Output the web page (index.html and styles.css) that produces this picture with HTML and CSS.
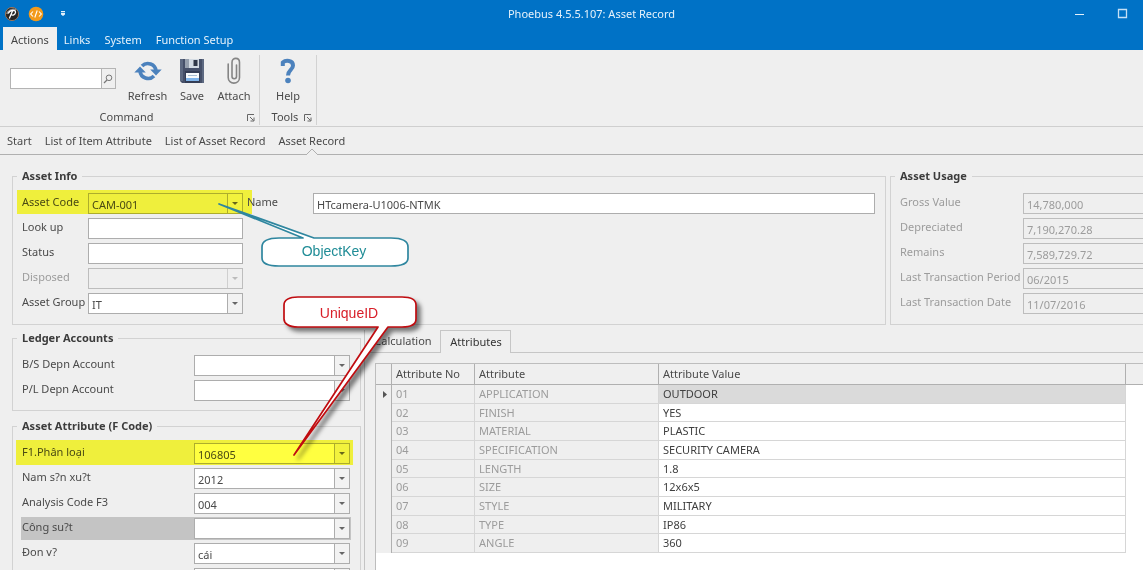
FILE: index.html
```
<!DOCTYPE html>
<html lang="en">
<head>
<meta charset="utf-8">
<title>Phoebus 4.5.5.107: Asset Record</title>
<link rel="stylesheet" href="styles.css">
</head>
<body>
<div class="app">
  <header class="titlebar">
    <div class="quick">
      <svg class="quick-icon" viewBox="0 0 16 16" aria-hidden="true"><circle cx="8" cy="8" r="6.600" fill="#262626" stroke="#96745c"/><path d="M3 8C3.500 5 8 2.500 12 4" stroke="#8a8a8a" stroke-width="2" fill="none"/><path d="M5.500 12 8.500 5M4.500 7C6 3.500 12 3.500 11.500 6.500 11.200 9 8.500 9.500 7.500 8.800" stroke="#fff" stroke-width="1.300" fill="none" stroke-linecap="round"/></svg>
      <svg class="quick-icon" viewBox="0 0 16 16" aria-hidden="true"><circle cx="8" cy="8" r="7.300" fill="#f39a1a"/><path d="M5 5.500 2.700 8 5 10.500M11 5.500 13.300 8 11 10.500M9.200 4.500 6.800 11.500" stroke="#fff" stroke-width="1.100" fill="none"/></svg>
      <button class="quick-more" aria-label="Customize toolbar"><svg width="6" height="6" viewBox="0 0 6 6"><path d="M1 0h4v1.300H1zM1 2h4v1.500L3 5 1 3.500z" fill="#e4f1fb"/></svg></button>
    </div>
    <h1 class="title">Phoebus 4.5.5.107: Asset Record</h1>
    <div class="window-buttons">
      <button aria-label="Minimize"><svg width="11" height="11" viewBox="0 0 11 11"><path d="M1 6.500h9" stroke="#e4f1fb"/></svg></button>
      <button aria-label="Maximize"><svg width="11" height="11" viewBox="0 0 11 11"><path d="M1.500 1.500h8v8h-8z" fill="none" stroke="#c5e0f5" stroke-width="1.300"/></svg></button>
    </div>
  </header>

  <nav class="tabs">
    <button class="tab tab-active">Actions</button>
    <button class="tab">Links</button>
    <button class="tab">System</button>
    <button class="tab">Function Setup</button>
  </nav>

  <section class="ribbon">
    <div class="group">
      <div class="tools">
        <div class="search">
          <input type="text" aria-label="Command search">
          <button aria-label="Search"><svg width="10" height="10" viewBox="0 0 10 10"><circle cx="6" cy="3.800" r="2.800" fill="none" stroke="#777"/><path d="M4 6 1 9" stroke="#777" stroke-width="1.300"/></svg></button>
        </div>
        <button class="tool tool-wide">
          <svg viewBox="0 0 28 28" aria-hidden="true"><path d="M8 9A8.200 8.200 0 0 1 22 14M20 19A8.200 8.200 0 0 1 6 14" fill="none" stroke="#4c82bd" stroke-width="3.600"/><path d="M.3 15.500 6 9.500 11.800 15.500zM16.200 12.500H27.700L22 18.500z" fill="#4c82bd"/></svg>
          Refresh
        </button>
        <button class="tool">
          <svg viewBox="0 0 28 28" aria-hidden="true"><path d="M2 2h24v24H4L2 24z" fill="#465069"/><path d="M2 2h3v22H2zM24 2h2v24h-2z" fill="#5d6981"/><path d="M7 14h15v12H7z" fill="#343d55"/><path d="M7 2h14v9H7z" fill="#96a0ae"/><path d="M11 2h10v9H11z" fill="#d3dae2"/><path d="M15.500 3h4v6h-4z" fill="#303747"/><path d="M8 16h13v8H8z" fill="#f7fafc"/><path d="M8 21h13v3H8z" fill="#7fb4ea"/><path d="M10 18.500h9" stroke="#a9bed2"/></svg>
          Save
        </button>
        <button class="tool">
          <svg viewBox="0 0 28 28" aria-hidden="true"><path d="M16.500 8V19.500C16.500 22.500 12 22.500 12 19.500V5.500C12 0 19.500 0 19.500 5.500V20.500C19.500 28 8.200 28 8.200 20.500V7" fill="none" stroke="#858585" stroke-width="1.600" stroke-linecap="round"/></svg>
          Attach
        </button>
      </div>
      <div class="caption"><span>Command</span><button class="launcher" aria-label="Command options"><svg width="8" height="8" viewBox="0 0 8 8"><path d="M.5 7V.5H7M3 3 6.500 6.500M7 3.500V7H3.500" fill="none" stroke="#666"/></svg></button></div>
    </div>
    <div class="group group-small">
      <div class="tools">
        <button class="tool">
          <svg viewBox="0 0 28 28" aria-hidden="true"><path d="M8.800 9V5.500C11.500 3 19 3 19 8.500 19 13 14 13 14 18.500" fill="none" stroke="#4c82bd" stroke-width="4"/><circle cx="14" cy="23.500" r="2.800" fill="#4c82bd"/></svg>
          Help
        </button>
      </div>
      <div class="caption"><span>Tools</span><button class="launcher" aria-label="Tools options"><svg width="8" height="8" viewBox="0 0 8 8"><path d="M.5 7V.5H7M3 3 6.500 6.500M7 3.500V7H3.500" fill="none" stroke="#666"/></svg></button></div>
    </div>
  </section>

  <nav class="crumbs">
    <a href="#">Start</a>
    <a href="#">List of Item Attribute</a>
    <a href="#">List of Asset Record</a>
    <a href="#" class="current">Asset Record<svg class="notch" width="14" height="7" viewBox="0 0 14 7"><path d="M1 7 7 1 13 7" fill="#efefef" stroke="#b0b0b0"/></svg></a>
  </nav>

  <main class="content">
    <div class="top">
      <fieldset class="box info">
        <legend>Asset Info</legend>
        <div class="rows">
          <div class="row marked mark-code"><label for="code">Asset Code</label><span class="combo"><select id="code" class="grey"><option>CAM-001</option></select></span></div>
          <div class="row"><label for="look">Look up</label><input id="look" type="text"></div>
          <div class="row"><label for="status">Status</label><input id="status" type="text"></div>
          <div class="row off"><label for="disposed">Disposed</label><span class="combo"><select id="disposed" disabled><option></option></select></span></div>
          <div class="row"><label for="agroup">Asset Group</label><span class="combo"><select id="agroup"><option>IT</option></select></span></div>
        </div>
        <div class="rows">
          <div class="row"><label for="name">Name</label><input id="name" type="text" value="HTcamera-U1006-NTMK"></div>
        </div>
      </fieldset>
      <fieldset class="box usage">
        <legend>Asset Usage</legend>
        <div class="rows">
          <div class="row off"><label for="gross">Gross Value</label><input id="gross" type="text" value="14,780,000" disabled></div>
          <div class="row off"><label for="depr">Depreciated</label><input id="depr" type="text" value="7,190,270.28" disabled></div>
          <div class="row off"><label for="remains">Remains</label><input id="remains" type="text" value="7,589,729.72" disabled></div>
          <div class="row off"><label for="period">Last Transaction Period</label><input id="period" type="text" value="06/2015" disabled></div>
          <div class="row off"><label for="date">Last Transaction Date</label><input id="date" type="text" value="11/07/2016" disabled></div>
        </div>
      </fieldset>
    </div>

    <div class="bottom">
      <div class="side">
        <fieldset class="box codes">
          <legend>Ledger Accounts</legend>
          <div class="rows">
            <div class="row"><label for="bs">B/S Depn Account</label><span class="combo"><select id="bs"><option></option></select></span></div>
            <div class="row"><label for="pl">P/L Depn Account</label><span class="combo"><select id="pl"><option></option></select></span></div>
          </div>
        </fieldset>
        <fieldset class="box codes">
          <legend>Asset Attribute (F Code)</legend>
          <div class="rows">
            <div class="row marked mark-f1"><label for="f1">F1.Phân loại</label><span class="combo"><select id="f1"><option>106805</option></select></span></div>
            <div class="row"><label for="f2">Nam s?n xu?t</label><span class="combo"><select id="f2"><option>2012</option></select></span></div>
            <div class="row"><label for="f3">Analysis Code F3</label><span class="combo"><select id="f3"><option>004</option></select></span></div>
            <div class="row focus"><label for="f4">Công su?t</label><span class="combo"><select id="f4"><option></option></select></span></div>
            <div class="row"><label for="f5">Đon v?</label><span class="combo"><select id="f5"><option>cái</option></select></span></div>
            <div class="row"><span class="combo"><select aria-label="Analysis code F6"><option></option></select></span></div>
          </div>
        </fieldset>
      </div>

      <section class="detail">
        <div class="subtabs">
          <button class="subtab">Calculation</button>
          <button class="subtab subtab-active">Attributes</button>
        </div>
        <div class="grid">
          <table>
            <colgroup><col class="c-mark"><col class="c-no"><col class="c-attr"><col><col class="c-rest"></colgroup>
            <thead><tr><th></th><th>Attribute No</th><th>Attribute</th><th>Attribute Value</th><th></th></tr></thead>
            <tbody>
              <tr class="selected"><td><svg width="4" height="7" viewBox="0 0 4 7"><path d="M0 0 4 3.500 0 7z" fill="#555"/></svg></td><td>01</td><td>APPLICATION</td><td>OUTDOOR</td><td></td></tr>
              <tr><td></td><td>02</td><td>FINISH</td><td>YES</td><td></td></tr>
              <tr><td></td><td>03</td><td>MATERIAL</td><td>PLASTIC</td><td></td></tr>
              <tr><td></td><td>04</td><td>SPECIFICATION</td><td>SECURITY CAMERA</td><td></td></tr>
              <tr><td></td><td>05</td><td>LENGTH</td><td>1.8</td><td></td></tr>
              <tr><td></td><td>06</td><td>SIZE</td><td>12x6x5</td><td></td></tr>
              <tr><td></td><td>07</td><td>STYLE</td><td>MILITARY</td><td></td></tr>
              <tr><td></td><td>08</td><td>TYPE</td><td>IP86</td><td></td></tr>
              <tr><td></td><td>09</td><td>ANGLE</td><td>360</td><td></td></tr>
            </tbody>
          </table>
        </div>
      </section>
    </div>
  </main>

  <div class="callout callout-key">
    <svg width="196" height="68" viewBox="0 0 196 68" aria-hidden="true"><path d="M4 3 88 37H64C50 37 47 42 47 46V57C47 62 53 65 64 65H176C188 65 193 62 193 57V46C193 41 188 37 176 37H99z" fill="#fff" stroke="#2f869f" stroke-width="1.700" stroke-linejoin="round"/></svg>
    <span>ObjectKey</span>
  </div>
  <div class="callout callout-id">
    <svg width="140" height="172" viewBox="0 0 140 172" aria-hidden="true"><path d="M14 160 98 32H18C8 32 4 28 4 24V10C4 5 9 2 18 2H122C132 2 136 5 136 10V24C136 29 132 32 122 32H108z" fill="#fff" stroke="#c00c10" stroke-width="1.700" stroke-linejoin="round"/></svg>
    <span>UniqueID</span>
  </div>
</div>
</body>
</html>
```
FILE: styles.css
```
* { box-sizing: border-box; }

body {
  margin: 0;
  background: #efefef;
  color: #4a4a4a;
  font: 11px/16px "Noto Sans", "Open Sans", sans-serif;
}

button, input, select { font: inherit; color: inherit; }

button {
  margin: 0;
  padding: 0;
  border: 0;
  background: none;
}

svg { display: block; }

.app {
  position: relative;
  display: flex;
  flex-direction: column;
  height: 100vh;
  overflow: hidden;
}

/* Title bar and ribbon tabs */
.titlebar {
  display: grid;
  grid-template-columns: 1fr auto 1fr;
  align-items: center;
  height: 27px;
  background: #0072c6;
  color: #e6f2fb;
}

.quick { display: flex; align-items: center; gap: 8px; padding-left: 4px; }
.quick-icon { width: 16px; height: 16px; }
.quick-more { margin-left: 8px; }
.title { margin: 0; padding-left: 40px; font-size: 11px; font-weight: 400; }
.window-buttons { display: flex; justify-content: flex-end; gap: 32px; padding-right: 15px; }

.tabs {
  display: flex;
  height: 23px;
  padding-left: 3px;
  background: #0072c6;
}

.tab { padding: 3px 7px 0; color: #e6f2fb; }
.tab-active { padding: 3px 8px 0; background: #efefef; color: #444; }

.ribbon { display: flex; height: 77px; border-bottom: 1px solid #cfcfcf; }

.group {
  display: flex;
  flex-direction: column;
  justify-content: space-between;
  margin: 5px 0 1px;
  border-right: 1px solid #d2d2d2;
}

.group:first-child { width: 260px; }
.group-small { width: 57px; }
.tools { display: flex; padding-left: 10px; }
.group-small .tools { justify-content: center; padding: 0; }

.search { display: flex; width: 106px; height: 21px; margin: 13px 8px 0 0; border: 1px solid #b4b4b4; }
.search input { flex: 1; min-width: 0; border: 0; padding: 0 3px; background: #fff; }
.search button { width: 14px; padding-left: 1px; border-left: 1px solid #b4b4b4; }

.tool { display: flex; flex-direction: column; align-items: center; gap: 3px; width: 42px; padding-top: 2px; }
.tool-wide { width: 47px; }
.tool svg { width: 28px; height: 28px; }

.caption { display: flex; padding: 0 4px 0 6px; }
.caption span { flex: 1; text-align: center; }
.launcher { padding-top: 2px; }

.crumbs {
  display: flex;
  gap: 13px;
  height: 28px;
  padding: 6px 7px 0;
  border-bottom: 1px solid #b0b0b0;
}

.crumbs a { color: inherit; text-decoration: none; }
.current { position: relative; }
.notch { position: absolute; left: 50%; bottom: -1px; margin-left: -7px; }

/* Record form */
.content { display: flex; flex: 1; flex-direction: column; min-height: 0; padding: 13px 0 0 12px; }
.top { display: grid; grid-template-columns: 1fr 253px; gap: 4px; }

.box {
  min-width: 0;
  margin: 0;
  padding: 9px 10px 10px 9px;
  border: 1px solid #d2d2d2;
}

legend { margin-left: -5px; padding: 0 5px; color: #3c3c3c; font-weight: 700; }
.info { display: grid; grid-template-columns: 221px 1fr; gap: 4px; }
.usage { padding-right: 0; border-right: 0; }

.rows { display: flex; flex-direction: column; gap: 4px; }
.row { position: relative; display: flex; justify-content: flex-end; height: 21px; }
.row label { flex: none; width: 66px; padding-top: 1px; white-space: nowrap; }
.usage label { width: 123px; }
.codes label { width: 172px; }
.usage .row input { border-right: 0; }

.row input, select {
  flex: 1;
  width: 100%;
  min-width: 0;
  height: 21px;
  margin: 0;
  padding: 2px 3px 0;
  border: 1px solid #adadad;
  border-radius: 0;
  background: #fff;
  appearance: none;
}

.combo { position: relative; flex: 1; }
.codes .combo { flex: none; width: 156px; }

.combo::before {
  content: "";
  position: absolute;
  inset: 1px 1px 1px auto;
  width: 14px;
  border-left: 1px solid #adadad;
  background: #f2f2f2;
}

.combo::after {
  content: "";
  position: absolute;
  right: 5px;
  top: 9px;
  border: 3px solid transparent;
  border-top-color: #666;
  border-bottom: 0;
}

.combo::before, .combo::after { pointer-events: none; }
select.grey { background: #efefef; }
.off { color: #9c9c9c; }
.off input, .off select { background: #efefef; border-color: #bdbdbd; color: #9c9c9c; opacity: 1; }
.off .combo::before { border-color: #cfcfcf; background: #efefef; }
.off .combo::after { border-top-color: #bbb; }
.focus { background: #c4c4c4; box-shadow: 0 0 0 1px #c4c4c4; }

.marked::after {
  content: "";
  position: absolute;
  background: #ffff40;
  mix-blend-mode: multiply;
  pointer-events: none;
}

.mark-code::after { inset: -3px -9px 0 -5px; }
.mark-f1::after { inset: -3px -3px -1px -6px; }

/* Lower half */
.bottom { display: flex; flex: 1; gap: 3px; min-height: 0; margin-top: 5px; }
.side { display: flex; flex: none; flex-direction: column; width: 349px; gap: 7px; }
.codes { flex: none; padding-bottom: 9px; }

.detail { display: flex; flex: 1; flex-direction: column; min-width: 0; border-left: 1px solid #c4c4c4; }
.subtabs { display: flex; height: 23px; border-bottom: 1px solid #c6c6c6; }
.subtab { width: 75px; padding: 0 0 0 1px; }
.subtab-active { width: 71px; height: 23px; border: 1px solid #c6c6c6; border-bottom: 0; background: #efefef; color: #333; }

.grid { flex: 1; margin: 10px 0 0 10px; border: 1px solid #bdbdbd; border-width: 1px 0 0 1px; background: #fff; }
table { width: 100%; border-collapse: separate; border-spacing: 0; table-layout: fixed; }
.c-mark { width: 16px; }
.c-no { width: 83px; }
.c-attr { width: 184px; }
.c-rest { width: 17px; }

th, td { padding: 0 4px; border: 0 solid #d6d6d6; border-width: 0 1px 1px 0; text-align: left; line-height: 16px; white-space: nowrap; }
th { height: 21px; border-color: #b0b0b0; background: #efefef; font-weight: 400; }
th:last-child { border-right: 0; }
td { height: 19px; color: #404040; }
tr:nth-child(3n+2) td { height: 18px; }
td:nth-child(-n+3) { background: #efefef; color: #9c9c9c; }
td:first-child { padding-left: 7px; border-bottom: 0; border-right-color: #b0b0b0; }
td:last-child { border: 0; }
.selected td:nth-child(4) { background: #dadada; }

/* Annotations laid over the form */
.callout { position: absolute; font: 14px/16px "Liberation Sans", Arial, sans-serif; }
.callout span { position: absolute; text-align: center; }
.callout-key { left: 215px; top: 201px; color: #1f8c96; }
.callout-key span { left: 45px; right: 3px; top: 42px; }
.callout-id { left: 280px; top: 295px; color: #d81e28; }
.callout-id svg { filter: drop-shadow(4px 4px 2px #00000080); overflow: visible; }
.callout-id span { left: 4px; right: 6px; top: 10px; }
```
